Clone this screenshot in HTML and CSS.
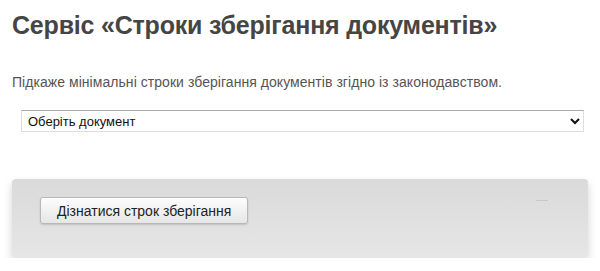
FILE: index.html
```html
<!DOCTYPE html>
<html lang="uk">
<head>
  <meta charset="UTF-8">
  <title>Строки зберігання документів</title>
  <link rel="stylesheet" href="styles.css">
</head>
<body>
  <div class="page">
    <h1>Сервіс «Строки зберігання документів»</h1>
    <p class="lead">Підкаже мінімальні строки зберігання документів згідно із законодавством.</p>

    <!-- вибір документа -->
    <div class="select-row">
      <select class="doc-select">
        <option>Оберіть документ</option>
      </select>
    </div>

    <!-- панель з кнопкою -->
    <div class="panel">
      <button class="btn">Дізнатися строк зберігання</button>
      <span class="panel-dash"></span>
    </div>
  </div>
</body>
</html>
```

FILE: styles.css
```css
body {
  margin: 0;
  font-family: 'Liberation Sans', Arial, sans-serif;
  background: #fff;
  color: #444;
}

.page {
  padding: 0 12px;
}

h1 {
  margin: 0;
  padding-top: 8px;
  font-size: 25px;
  line-height: 34px;
  letter-spacing: -0.2px;
  font-weight: bold;
  color: #454545;
}

.lead {
  margin: 30px 0 0;
  font-size: 14px;
  line-height: 20px;
  letter-spacing: 0.05px;
  color: #555;
}

.select-row {
  padding: 0 4px 0 9px;
  margin-top: 18px;
}

.doc-select {
  display: block;
  width: 100%;
  height: 22px;
  padding: 0 2px;
  font-family: 'Liberation Sans', Arial, sans-serif;
  font-size: 13px;
  color: #111;
  background: #fff;
  border: 1px solid #ddd;
  border-top-color: #aaa;
  border-radius: 0;
}

.panel {
  position: relative;
  margin-top: 47px;
  height: 79px;
  padding: 18px 28px 0;
  box-sizing: border-box;
  background: linear-gradient(to bottom, #dadada, #e6e6e6);
  border-radius: 4px;
  box-shadow: 0 4px 8px rgba(0, 0, 0, 0.18);
}

.btn {
  height: 27px;
  padding: 0 16px;
  font-family: 'Liberation Sans', Arial, sans-serif;
  font-size: 14px;
  color: #222;
  background: linear-gradient(to bottom, #fdfdfd, #e6e6e6);
  border: 1px solid #b8b8b8;
  border-radius: 3px;
  box-shadow: 0 1px 2px rgba(0, 0, 0, 0.15);
  cursor: pointer;
}

.panel-dash {
  position: absolute;
  top: 21px;
  right: 40px;
  width: 12px;
  height: 1px;
  background: #c8c8c8;
}
```
